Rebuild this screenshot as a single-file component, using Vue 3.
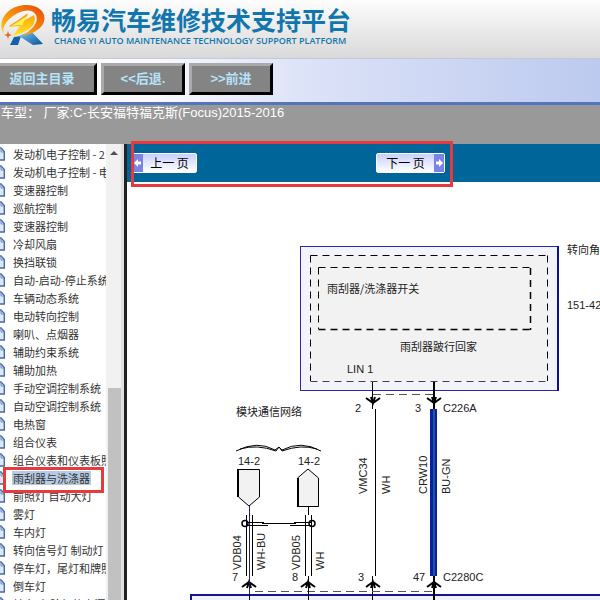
<script setup>
const rows = [
  '发动机电子控制 - 2', '发动机电子控制 - 电', '变速器控制', '巡航控制', '变速器控制', '冷却风扇',
  '换挡联锁', '自动-启动-停止系统', '车辆动态系统', '电动转向控制', '喇叭、点烟器', '辅助约束系统',
  '辅助加热', '手动空调控制系统', '自动空调控制系统', '电热窗', '组合仪表', '组合仪表和仪表板照',
  '雨刮器与洗涤器', '前照灯 自动大灯', '雾灯', '车内灯', '转向信号灯 制动灯', '停车灯，尾灯和牌照',
  '倒车灯', '转向/危险灯的电源'
]
const selected = 18
</script>

<template>
  <div class="page">
    <header class="brand">
      <svg class="logo" viewBox="0 0 46 46" aria-hidden="true">
        <defs>
          <linearGradient id="ring" x1="1" y1="0" x2="0" y2="1">
            <stop offset="0" stop-color="#e8480c" />
            <stop offset=".5" stop-color="#f58a0a" />
            <stop offset="1" stop-color="#ffd21c" />
          </linearGradient>
          <linearGradient id="bolt" x1="0" y1="0" x2="0" y2="1">
            <stop offset="0" stop-color="#f9a010" />
            <stop offset="1" stop-color="#ffe61a" />
          </linearGradient>
          <linearGradient id="leg" x1="0" y1="0" x2="1" y2="1">
            <stop offset="0" stop-color="#7ccdf0" />
            <stop offset="1" stop-color="#064f9c" />
          </linearGradient>
        </defs>
        <path d="M14 37 L21 36 L18 45 H10Z" fill="#1560a8" />
        <path d="M19 36 L31 31 L43 44 L33 45Z" fill="url(#leg)" />
        <path d="M4 34 C-3 24 4 7 24 5 C40 4 48 14 43 24 C39 31 31 34 22 36 C33 29 39 22 36 15 C32 8 21 10 13 16 C5 22 2 28 4 34Z" fill="url(#ring)" />
        <path d="M9 27 L28 13 L25 20 L34 15 Q36 20 33 25 Q28 32 13 36 L20 26Z" fill="url(#bolt)" />
        <path d="M9 26 L28 14 L20 26Z" fill="#f39a14" />
        <path d="M11 26 L27 16 L18 33 L22 25Z" fill="#fff04a" />
        <path d="M8 31 L9 34 L12 35 L9 36 L8 39 L7 36 L4 35 L7 34Z" fill="#ef641c" />
      </svg>
      <div class="names">
        <h1>畅易汽车维修技术支持平台</h1>
        <p>CHANG YI AUTO MAINTENANCE TECHNOLOGY SUPPORT PLATFORM</p>
      </div>
    </header>

    <nav class="toolbar">
      <button type="button" class="home">返回主目录</button>
      <button type="button">&lt;&lt;后退.</button>
      <button type="button">&gt;&gt;前进</button>
    </nav>

    <div class="vehicle">车型： 厂家:C-长安福特福克斯(Focus)2015-2016</div>

    <div class="body">
      <aside class="tree">
        <ul>
          <li v-for="(row, i) in rows" :key="i">
            <svg class="doc" viewBox="0 0 6 14" aria-hidden="true">
              <path d="M-4 1 H1 L4.300 4.500 V13 H-4Z" fill="#dce9fc" stroke="#4668a8" stroke-width="1.400" />
              <path d="M1 1 V5 H4" fill="none" stroke="#6d8cc4" />
            </svg>
            <a href="#" :class="{ on: i === selected }">{{ row }}</a>
          </li>
        </ul>
        <div class="scroll"><span class="up"></span><span class="thumb"></span></div>
        <div class="mark mark-item"></div>
      </aside>

      <main class="content">
        <div class="pager">
          <button type="button" class="prev">
            <span class="cap"><svg viewBox="0 0 8 10" aria-hidden="true"><path d="M0 5 L4 1 V3.500 H7 V6.500 H4 V9Z" fill="#fff" /></svg></span>
            <span class="label">上一 页</span>
          </button>
          <button type="button" class="next">
            <span class="label">下一 页</span>
            <span class="cap"><svg viewBox="0 0 8 10" aria-hidden="true"><path d="M8 5 L4 1 V3.500 H1 V6.500 H4 V9Z" fill="#fff" /></svg></span>
          </button>
          <div class="mark mark-pager"></div>
        </div>

        <svg class="diagram" viewBox="127 182 473 418" role="img" aria-label="雨刮器/洗涤器">
          <rect x="300.500" y="246.500" width="257" height="144" fill="#f3f3fb" stroke="#2a2a9c" />
          <path d="M558 246 V391" stroke="#10108c" stroke-width="2" />
          <rect x="311" y="256" width="236" height="125" fill="#f2f2f2" />
          <g fill="none" stroke="#000" stroke-dasharray="7 5">
            <path d="M310.500 255.500 H548 M310.500 255.500 V381 M547.500 255.500 V381" />
            <path d="M310.500 381.500 H548" stroke="#444" />
            <path d="M318.500 267.500 H531 M318.500 267.500 V329" />
            <path d="M530.500 268 V330 M318.500 329.500 H531" stroke-width="1.500" />
          </g>

          <g fill="none" stroke="#000">
            <path d="M372.500 382 V409 M375.500 409 V576 M372.500 576 V600" />
            <path d="M434 382 V409 M434 576 V600" stroke-width="2" />
            <path d="M373 394.500 H434 M255 591.500 H434" stroke="#555" stroke-dasharray="8 5" />
            <g stroke-width="2">
              <path d="M366 398 L373 403 L380 398 M371 397 L373 403 L375 397" />
              <path d="M427 398 L434 403 L441 398 M432 397 L434 403 L436 397" />
              <path d="M366 587 L373 582 L380 587 M371 588 L373 582 L375 588" />
              <path d="M427 587 L434 582 L441 587 M432 588 L434 582 L436 588" />
              <path d="M242 587 L249 582 L256 587 M247 588 L249 582 L251 588" />
              <path d="M301 587 L308 582 L315 587 M306 588 L308 582 L310 588" />
            </g>
          </g>
          <path d="M433.500 409 V576" stroke="#0a1ea8" stroke-width="7" />
          <path d="M434 409 V576" stroke="#1c5c8c" stroke-width="2" />

          <g fill="none" stroke="#000">
            <path d="M236 451 Q257 440 275 450 L279 447 L282 450 Q301 440 321 451" />
            <path d="M240 449 Q257 444 276 451 L279 447 L282 451 Q301 444 317 449" />
            <path d="M238.500 469.500 H259.500 V497 L249 506 L238.500 497Z" fill="#f2f2f2" />
            <path d="M238 469 V497" stroke-width="2" />
            <path d="M297.500 506.500 V478 L308 469 L318.500 478 V506.500Z" fill="#f2f2f2" />
            <path d="M298 478 V507" stroke-width="2" />
            <path d="M246.500 515 V576 M252.500 515 V576 M305.500 515 V576 M311.500 515 V576 M308.500 507 V515 M308.500 576 V600" />
            <path d="M249.500 506 V600" stroke="#20205c" />
            <circle cx="245" cy="523.500" r="3" stroke-width="1.500" />
            <circle cx="312" cy="523.500" r="3" stroke-width="1.500" />
            <path d="M246 522.500 H264 M262 523.500 H296 M294 522.500 H312 M247 525.500 H268 M290 525.500 H312" />
          </g>
          <path d="M191 600 V594.500 H600 V600Z" fill="#f1f1fb" />
          <path d="M191 600 V595 H600" fill="none" stroke="#14148c" stroke-width="2" />
          <path d="M249.500 594 V600 M308.500 594 V600 M372.500 594 V600" stroke="#000" />
          <path d="M434 594 V600" stroke="#000" stroke-width="2" />

          <g class="zh">
            <text x="327" y="293">雨刮器/洗涤器开关</text>
            <text x="400" y="351">雨刮器跛行回家</text>
            <text x="567" y="254">转向角</text>
            <text x="236" y="416">模块通信网络</text>
          </g>
          <g class="code">
            <text x="347" y="373">LIN 1</text>
            <text x="567" y="309">151-42</text>
            <text x="355" y="412">2</text>
            <text x="415" y="412">3</text>
            <text x="443" y="412">C226A</text>
            <text x="238" y="465">14-2</text>
            <text x="298" y="465">14-2</text>
            <text x="232" y="581">7</text>
            <text x="292" y="581">8</text>
            <text x="358" y="581">3</text>
            <text x="413" y="581">47</text>
            <text x="443" y="581">C2280C</text>
            <text transform="translate(241 570) rotate(-90)">VDB04</text>
            <text transform="translate(265 570) rotate(-90)">WH-BU</text>
            <text transform="translate(300 570) rotate(-90)">VDB05</text>
            <text transform="translate(324 570) rotate(-90)">WH</text>
            <text transform="translate(367 494) rotate(-90)">VMC34</text>
            <text transform="translate(390 494) rotate(-90)">WH</text>
            <text transform="translate(427 494) rotate(-90)">CRW10</text>
            <text transform="translate(450 494) rotate(-90)">BU-GN</text>
          </g>
        </svg>
      </main>
    </div>
  </div>
</template>

<style>
body { margin: 0; overflow: hidden; background: #fff; }
</style>

<style scoped>
.page {
  display: flex;
  flex-direction: column;
  height: 100vh;
  overflow: hidden;
  font-family: "Liberation Sans", "Noto Sans CJK SC", sans-serif;
}
.brand {
  display: flex;
  flex: none;
  height: 59px;
  box-sizing: border-box;
  border-bottom: 1px solid #c3c9d8;
  background: linear-gradient(#fdfdfd, #d9d9d9);
}
.logo { width: 46px; height: 46px; }
.names { padding: 5px 0 0 5px; color: #1276ae; white-space: nowrap; }
h1 {
  margin: 0;
  font: 700 25px/28px "Noto Sans CJK SC", sans-serif;
}
p {
  margin: 0;
  padding-left: 3px;
  font: 600 9px/16px "Open Sans", sans-serif;
}
.toolbar {
  display: flex;
  flex: none;
  gap: 4px;
  height: 46px;
  box-sizing: border-box;
  padding-top: 4px;
  border-bottom: 3px solid #5474bb;
  background: linear-gradient(90deg, #fff 0, #fafaff 25%, #dde3f8 50%, #bccaef 100%);
}
.toolbar button {
  width: 84px;
  height: 32px;
  padding: 0;
  border: 3px solid;
  border-color: #aaa #000 #000 #aaa;
  background: #848484;
  color: #b5e3fa;
  font: 700 13px/24px "Liberation Sans", "Noto Sans CJK SC", sans-serif;
}
.toolbar .home { width: 110px; margin-left: -13px; }
.vehicle {
  flex: none;
  height: 39px;
  padding-left: 1px;
  background: #999;
  color: #fff;
  font-size: 13px;
  line-height: 16px;
  white-space: nowrap;
}
.body { display: flex; flex: 1; min-height: 0; }
.tree {
  position: relative;
  display: flex;
  flex: none;
  width: 127px;
  box-sizing: border-box;
  border-right: 3px solid #222;
  background: #e0e0e0;
}
ul {
  flex: none;
  width: 106px;
  margin: 0;
  padding: 1px 0 0;
  overflow: hidden;
  background: #fff;
  list-style: none;
}
li { display: flex; align-items: center; gap: 6px; height: 18px; white-space: nowrap; }
.doc { flex: none; width: 6px; height: 14px; }
li a {
  padding: 0 1px;
  color: #333;
  font: 11px/14px "Noto Sans CJK SC", sans-serif;
  text-decoration: none;
}
li a.on { background: #b7cbe4; }
.scroll {
  display: flex;
  flex-direction: column;
  width: 15px;
  background: #f1f1f1;
}
.up {
  align-self: center;
  margin-top: 7px;
  border: 4px solid transparent;
  border-top: 0;
  border-bottom: 4px solid #505050;
}
.thumb { flex: 1; margin: 233px 0 0 2px; background: #c1c1c1; }
.mark { position: absolute; box-sizing: border-box; border: 3px solid #e83a3c; pointer-events: none; }
.mark-item { top: 323px; left: 3px; width: 101px; height: 26px; }
.mark-pager { top: -3px; left: 4px; width: 322px; height: 46px; }
.content { flex: 1; min-width: 0; background: #fff; }
.pager {
  position: relative;
  display: flex;
  gap: 179px;
  height: 38px;
  box-sizing: border-box;
  padding: 9px 0 0 5px;
  background: #069;
}
.pager button {
  display: flex;
  height: 20px;
  padding: 0;
  border: 1px solid #fff;
  border-radius: 2px;
  background: linear-gradient(#c9d0fa, #fff);
  color: #000;
  font: 400 12px/18px "Noto Sans CJK SC", sans-serif;
}
.prev { width: 65px; }
.next { width: 69px; }
.label { flex: 1; }
.cap { display: flex; align-items: center; justify-content: center; width: 10px; height: 18px; background: #7b83e4; }
.cap svg { width: 8px; height: 10px; }
.diagram { display: block; width: 473px; height: 418px; }
.zh { font: 11px "Noto Sans CJK SC", sans-serif; fill: #222; }
.code { font: 11px "Liberation Sans", sans-serif; fill: #222; }
</style>
